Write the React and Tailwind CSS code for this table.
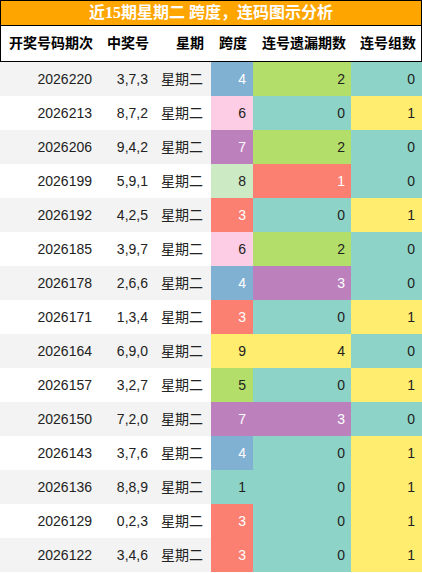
import React from "react";

const rows = [
  ["2026220", "3,7,3", 4, 2, 0],
  ["2026213", "8,7,2", 6, 0, 1],
  ["2026206", "9,4,2", 7, 2, 0],
  ["2026199", "5,9,1", 8, 1, 0],
  ["2026192", "4,2,5", 3, 0, 1],
  ["2026185", "3,9,7", 6, 2, 0],
  ["2026178", "2,6,6", 4, 3, 0],
  ["2026171", "1,3,4", 3, 0, 1],
  ["2026164", "6,9,0", 9, 4, 0],
  ["2026157", "3,2,7", 5, 0, 1],
  ["2026150", "7,2,0", 7, 3, 0],
  ["2026143", "3,7,6", 4, 0, 1],
  ["2026136", "8,8,9", 1, 0, 1],
  ["2026129", "0,2,3", 3, 0, 1],
  ["2026122", "3,4,6", 3, 0, 1],
];

// span colours (set3 palette)
const spanColor = {
  1: "bg-[#8dd3c7] text-[#222]",
  3: "bg-[#fb8072] text-white",
  4: "bg-[#80b1d3] text-white",
  5: "bg-[#b3de69] text-[#222]",
  6: "bg-[#fccde5] text-[#222]",
  7: "bg-[#bc80bd] text-white",
  8: "bg-[#ccebc5] text-[#222]",
  9: "bg-[#ffed6f] text-[#222]",
};

const missColor = {
  0: "bg-[#8dd3c7] text-[#222]",
  1: "bg-[#fb8072] text-white",
  2: "bg-[#b3de69] text-[#222]",
  3: "bg-[#bc80bd] text-white",
  4: "bg-[#ffed6f] text-[#222]",
};

const groupColor = {
  0: "bg-[#8dd3c7] text-[#222]",
  1: "bg-[#ffed6f] text-[#222]",
};

const cols = "grid grid-cols-[97px_55px_59px_42px_98px_71px]";

export default function App() {
  return (
    <div className="w-[422px] bg-white font-['Liberation_Sans','Noto_Sans_CJK_SC',sans-serif] text-[14px] text-[#222]">
      <div className="h-[26px] flex items-center justify-center bg-[#ffa500] border border-black text-white font-bold text-[16px] font-['Liberation_Serif','Noto_Sans_CJK_SC',serif]">
        近15期星期二 跨度，连码图示分析
      </div>
      <div className={`${cols} h-[36px] items-center border-x border-b border-black font-bold text-black text-right`}>
        <div className="pr-[5px]">开奖号码期次</div>
        <div className="pr-[4px]">中奖号</div>
        <div className="pr-[8px]">星期</div>
        <div className="pr-[7px]">跨度</div>
        <div className="pr-[6px]">连号遗漏期数</div>
        <div className="pr-[7px]">连号组数</div>
      </div>
      {rows.map((r, i) => (
        <div
          key={r[0]}
          className={`${cols} h-[34px] text-right ${i % 2 === 0 ? "bg-[#f3f3f3]" : "bg-white"}`}
        >
          <div className="flex items-center justify-end pr-[5px]">{r[0]}</div>
          <div className="flex items-center justify-end pr-[4px]">{r[1]}</div>
          <div className="flex items-center justify-end pr-[8px]">星期二</div>
          <div className={`flex items-center justify-end pr-[7px] ${spanColor[r[2]]}`}>{r[2]}</div>
          <div className={`flex items-center justify-end pr-[6px] ${missColor[r[3]]}`}>{r[3]}</div>
          <div className={`flex items-center justify-end pr-[7px] ${groupColor[r[4]]}`}>{r[4]}</div>
        </div>
      ))}
    </div>
  );
}
